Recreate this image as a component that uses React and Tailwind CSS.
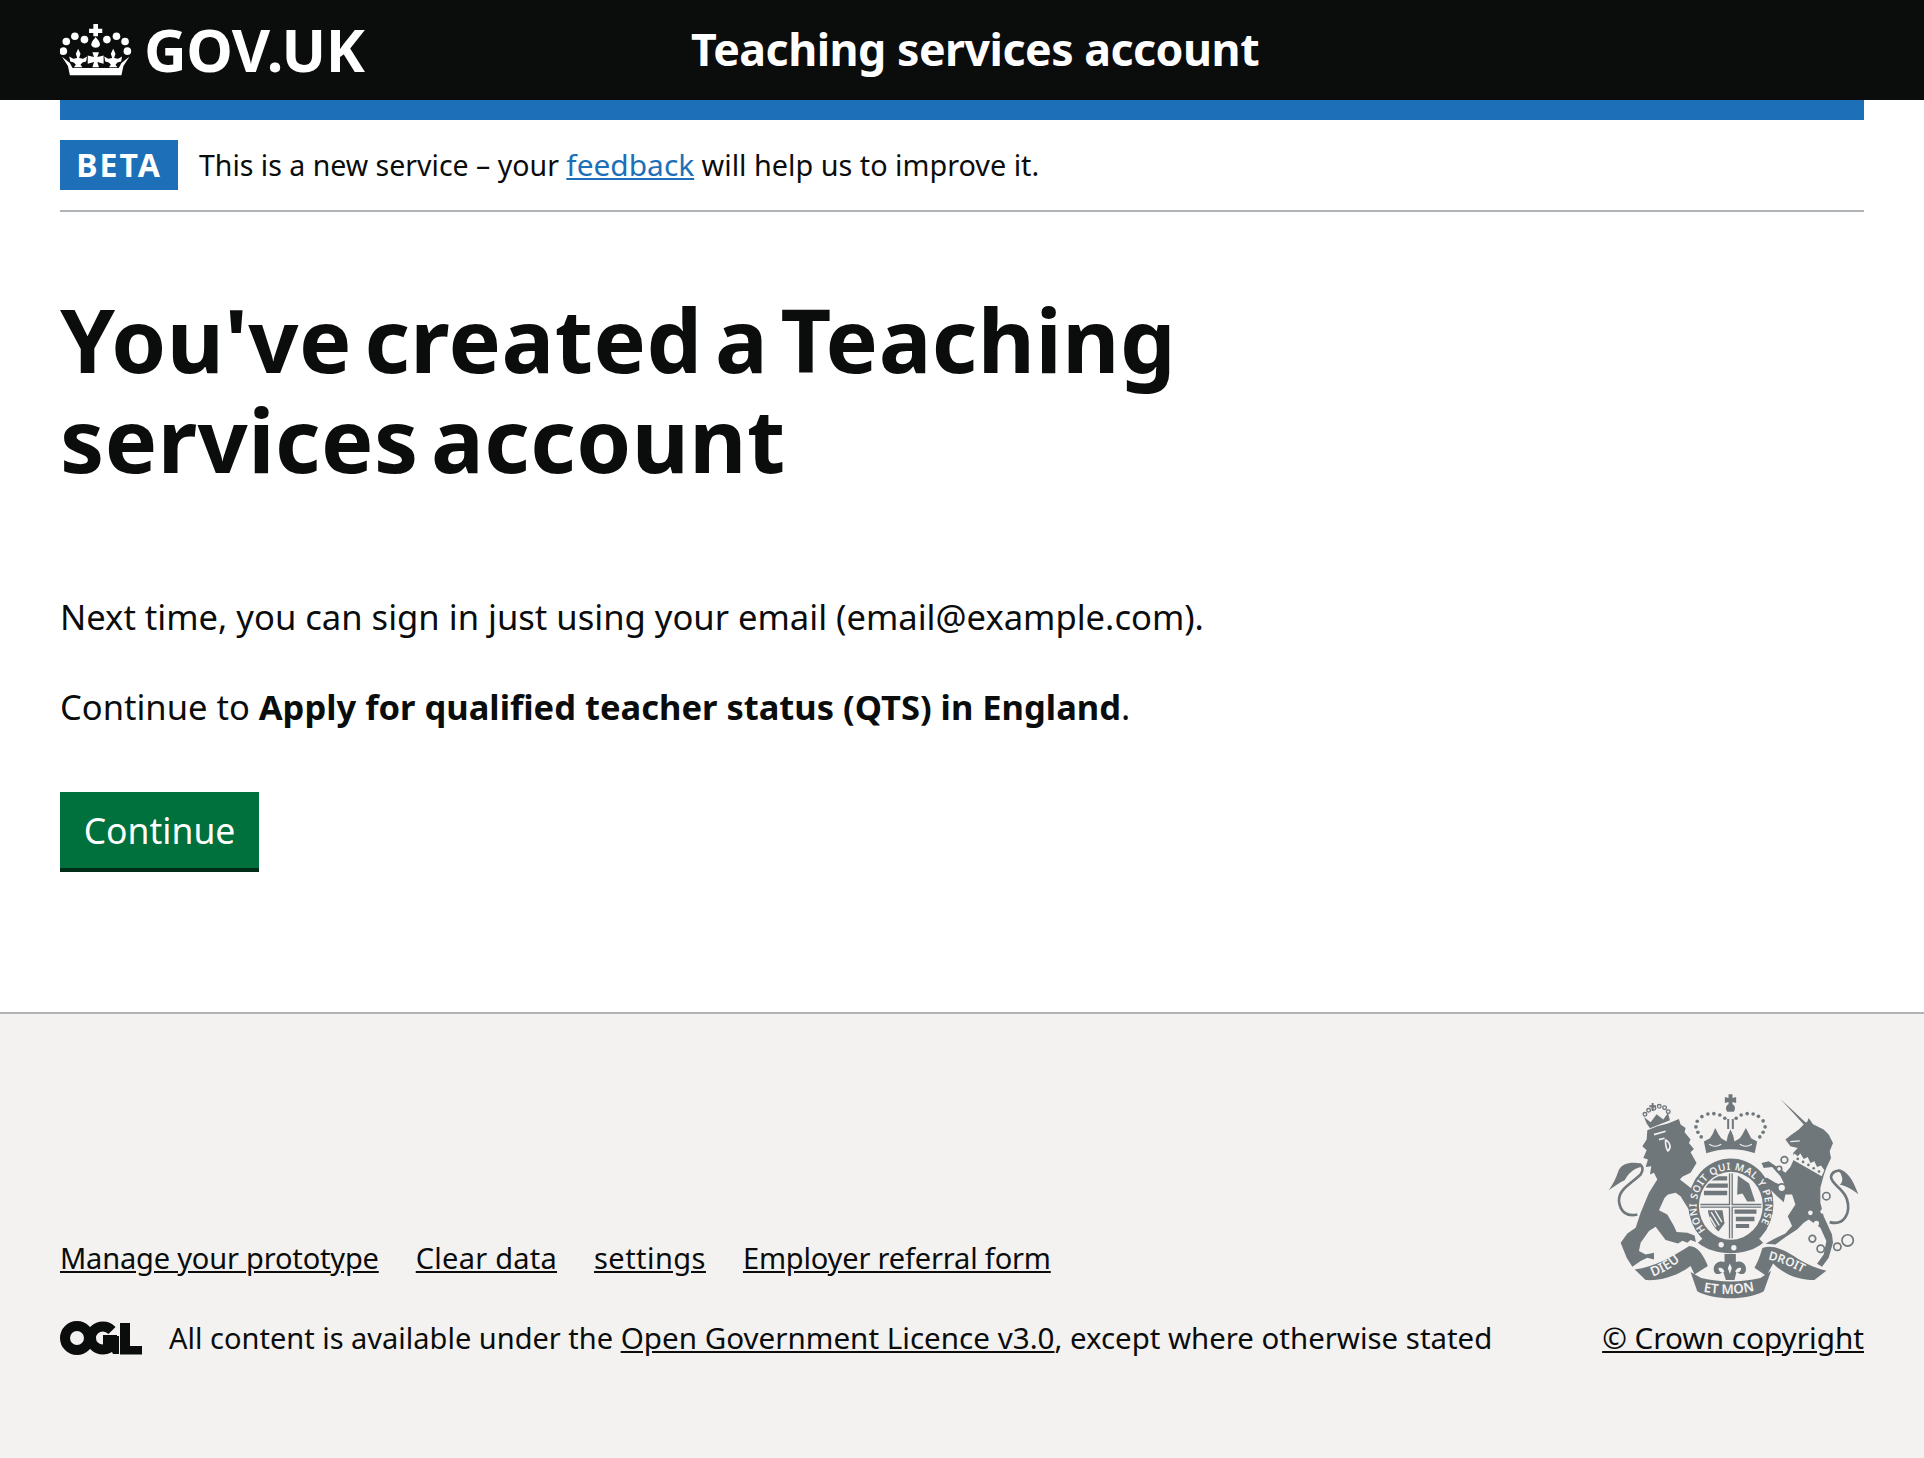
const sans = { fontFamily: '"Noto Sans", sans-serif' };

function Crown() {
  const dots = [[79,118],[105,102],[134,112],[202,112],[231,102],[257,118],[70,147],[264,147]];
  const fleur = "M115 140L122 155L118 168L130 170L142 163L139 178L128 181L122 188L128 196H102L108 188L102 181L91 178L88 163L100 170L112 168L108 155Z";
  return (
    <svg viewBox="60 62 218 160" className="w-[72px] h-[53px] shrink-0" fill="#fff" aria-hidden="true">
      {dots.map(([x, y], i) => <circle key={i} cx={x} cy={y} r="11.500" />)}
      <path d="M161 65h14v14h13v13h-13v10h-14V92h-13V79h13z" />
      <path d="M168 104C180 118 183 125 180 131C176 139 160 139 156 131C153 125 156 118 168 104Z" />
      <path d="M158 150L178 150L173 165L192 160L192 185L173 180L178 196L158 196L163 180L144 185L144 160L163 165Z" />
      <path d={fleur} />
      <path d={fleur} transform="translate(336 0) scale(-1 1)" />
      <path d="M90 220L84 192L66 164L90 183L98 198H238L246 183L270 164L252 192L246 220Z" />
    </svg>
  );
}

function Ogl() {
  return (
    <svg viewBox="0 0 82 34" className="w-[82px] h-[34px] shrink-0" fill="none" stroke="#0b0c0c" aria-hidden="true">
      <circle cx="17" cy="17" r="12" strokeWidth="10" />
      <path d="M52 9.500C49 6.500 46 5.500 43 5.500 36 5.500 31 10.500 31 17s5 11.500 12 11.500c4 0 8-2 9-5.500v-4H43" strokeWidth="10" />
      <path d="M46 15h13v18H53l-2-4z" fill="#0b0c0c" stroke="none" />
      <path d="M60 2h10v23h12v8.500H60z" fill="#0b0c0c" stroke="none" />
    </svg>
  );
}

function RoyalArms() {
  const c = "#6f777b";
  const bg = "#f3f2f1";
  const crownDots = [[332,172],[322,158],[316,142],[320,125],[334,111],[352,103],[370,102],[388,106],[403,116],[437,116],[452,106],[470,102],[488,103],[504,110],[518,124],[524,142],[518,158],[508,172]];
  const smallDots = [[163,104],[174,92],[190,86],[206,80],[222,84],[233,96]];
  const rings = [[582,241,10],[566,268,8],[574,325,12],[708,350,11],[666,478,10],[691,508,11],[741,502,11],[772,483,17]];
  const font = "Noto Sans, sans-serif";
  return (
    <svg viewBox="50 40 755 625" className="w-[252px] h-[208px]" aria-hidden="true">
      <defs>
        <path id="garter" d="M345 452A103 108 0 1 1 497 452" />
        <path id="ribbonLeft" d="M186 592C225 578 265 552 300 516" />
        <path id="ribbonMid" d="M332 636Q420 654 510 630" />
        <path id="ribbonRight" d="M533 540C570 548 620 568 655 592" />
        <clipPath id="shieldClip"><ellipse cx="421" cy="379" rx="92" ry="98" /></clipPath>
      </defs>

      {/* lion */}
      <path fill={c} d="M170 152L200 140L232 132L265 118L270 135L285 145L282 158L300 180L295 190L310 208L300 218L318 250L300 280L275 292L268 300L300 325L322 365L332 392L318 402L300 398L282 370L270 350L255 340L232 345L222 355L205 392L230 405L250 440L258 458L290 460L312 468L316 488L300 482L290 490L276 484L262 492L225 482L195 442L175 455L150 490L145 515L165 525L190 520L190 540L170 535L150 545L125 562L108 535L90 490L110 462L135 445L150 400L175 340L200 300L190 280L178 285L182 260L165 262L172 240L158 235L168 212L155 200L168 180Z" />
      <path fill="none" stroke={bg} strokeWidth="5" d="M190 165L225 155M225 180C240 190 242 205 232 214C226 206 224 195 225 180M205 180L222 176" />
      <path fill="none" stroke={c} strokeWidth="8" d="M140 405C110 412 88 398 85 365C83 330 118 315 150 285C160 270 156 258 145 254" />
      <path fill={c} d="M150 252C120 246 95 252 84 272C76 296 66 316 54 332C72 320 88 308 102 302C112 282 130 266 150 262Z" />
      {smallDots.map(([x, y], i) => <circle key={i} cx={x} cy={y} r="5.500" fill="none" stroke={c} strokeWidth="4" />)}
      <path fill={c} d="M160 112L180 128L198 104L218 120L232 100L238 122L178 146L168 132Z" />
      <path fill={c} d="M183 70h6v7h7v6h-7v11h-6V83h-7v-6h7z" />

      {/* unicorn */}
      <path fill={c} d="M570 58L645 128L650 128L655 115L668 134L700 150L715 165L728 190L718 215L722 235L708 265L700 288L690 325L690 370L700 410L725 465L728 490L715 535L695 562L680 553L700 525L708 485L690 445L655 420L640 430L620 450L590 470L555 495L525 493L552 478L585 462L605 440L592 410L615 375L605 345L585 345L580 368L560 350L530 320L515 298L530 295L555 310L585 320L570 290L545 262L520 265L513 250L535 245L560 262L585 280L600 262L612 235L608 220L622 205L600 200L585 180L600 168L625 150L640 135Z" />
      <path fill="none" stroke={bg} strokeWidth="4" d="M600 186L628 184" />
      <path fill={bg} d="M612 222L622 230L630 222L640 238L652 232L660 250L672 245L680 262L692 258L702 272L694 290L606 240Z" />
      {[[622,238],[638,247],[654,256],[670,266],[686,276]].map(([x, y], i) => <circle key={i} cx={x} cy={y} r="4" fill={c} />)}
      <path fill="none" stroke={c} strokeWidth="8" d="M718 428C762 440 782 400 770 360C760 325 722 315 722 292C724 276 742 270 754 276" />
      <path fill={c} d="M742 268C770 272 786 296 804 344C780 326 764 318 748 316C762 304 756 286 742 268Z" />
      {rings.map(([x, y, r], i) => <circle key={i} cx={x} cy={y} r={r} fill={bg} stroke={c} strokeWidth="5" />)}
      <circle cx="660" cy="400" r="7" fill={bg} /><circle cx="678" cy="432" r="8" fill={bg} /><circle cx="697" cy="396" r="7" fill={bg} />

      {/* royal crown */}
      {crownDots.map(([x, y], i) => <circle key={i} cx={x} cy={y} r="5.500" fill={c} />)}
      <path fill={c} d="M414 44h12v11l11-3v18l-11-3v7c8 4 10 14 4 22h-20c-6-8-4-18 4-22v-7l-11 3V52l11 3z" />
      <path fill={c} d="M410 118h6v30h-6zM424 118h6v30h-6z" />
      <path fill={c} d="M340 186L358 176L366 164L374 145L384 164L392 176L408 186L412 168L420 150L428 168L432 186L448 176L456 164L466 145L476 164L482 176L500 186L492 224L348 224Z" />
      <path fill="none" stroke={bg} strokeWidth="3.500" d="M356 194Q374 206 392 194M448 194Q466 206 484 194" />
      <path fill={bg} d="M345 222C392 205 448 205 497 222L486 238C448 224 392 224 356 238Z" />

      {/* garter and shield */}
      <ellipse cx="421" cy="375" rx="128" ry="138" fill={c} />
      <ellipse cx="421" cy="379" rx="96" ry="102" fill={bg} />
      <g clipPath="url(#shieldClip)">
        <path fill={bg} stroke={c} strokeWidth="4" d="M320 274H417V375H320ZM425 274H522V375H425ZM320 383H417V490H320ZM425 383H522V490H425Z" />
        <path fill={c} d="M340 290h70v13h-70zM346 312h66v13h-66zM340 334h70v13h-70zM442 288l34 24 18 54h-24l-14-24-16 4z" />
        <path fill={c} d="M432 390h66v13h-66zM436 412h56v13h-56zM436 434h40v12h-40zM352 392h44l6 40-18 24c-16-14-28-36-32-64z" />
        <path stroke={bg} strokeWidth="4" d="M362 398l24 40M374 394l20 34M358 412l18 30" />
      </g>
      <text fontFamily={font} fontSize="30" fontWeight="600" fill={bg} letterSpacing="1.800"><textPath href="#garter">HONI SOIT QUI MAL Y PENSE</textPath></text>
      <path d="M342 472C385 504 457 504 500 472L518 490C470 532 372 532 322 490Z" fill={c} />
      <circle cx="392" cy="496" r="8" fill={bg} /><circle cx="430" cy="505" r="8" fill={bg} />

      {/* ribbons and fleur-de-lis */}
      <path fill={c} d="M132 570C190 565 250 530 296 500C320 500 338 525 352 560L312 585L300 560C260 590 210 605 165 602Z" />
      <path fill={c} d="M516 506C545 495 580 510 610 530C640 550 670 565 708 574L672 602C630 602 585 590 548 552L528 590L492 565C506 540 510 525 516 506Z" />
      <path fill={c} d="M300 578L332 596C390 610 450 610 510 596L542 574L520 636C470 664 370 664 320 636Z" />
      <path fill={c} d="M402 524H436V548C450 542 470 552 466 574C462 590 446 584 438 576L432 602H406L398 576C390 584 374 590 370 574C366 552 388 542 402 548Z" />
      <path fill={bg} d="M418 552l6 14-6 18-6-18zM384 566c8-4 14 2 18 10-8 6-18 2-18-10zM452 566c-8-4-14 2-18 10 8 6 18 2 18-10z" />
      <text fontFamily={font} fontSize="40" fontWeight="600" fill={bg}><textPath href="#ribbonLeft">DIEU</textPath></text>
      <text fontFamily={font} fontSize="40" fontWeight="600" fill={bg}><textPath href="#ribbonMid" startOffset="6">ET MON</textPath></text>
      <text fontFamily={font} fontSize="36" fontWeight="600" fill={bg}><textPath href="#ribbonRight">DROIT</textPath></text>
    </svg>
  );
}

export default function App() {
  return (
    <div style={sans} className="min-h-[1458px] flex flex-col bg-white text-[#0b0c0c]">
      <header className="bg-[#0b0c0c] h-[100px] px-[60px] pb-[2px] flex items-center text-white">
        <div className="w-[631px] flex items-center gap-[12px]">
          <Crown />
          <span className="text-[59px] leading-none font-bold tracking-[-0.5px]">GOV.UK</span>
        </div>
        <span className="text-[44.7px] leading-none font-bold tracking-[-0.5px]">Teaching services account</span>
      </header>

      <main className="px-[60px] flex-1">
        <div className="h-[20px] bg-[#1d70b8]" />
        <div className="h-[92px] flex items-center gap-[21px] border-b-2 border-[#b1b4b6]">
          <strong className="w-[118px] h-[50px] bg-[#1d70b8] text-white text-[32px] font-bold tracking-[2px] flex items-center justify-center">BETA</strong>
          <p className="text-[28.5px]">This is a new service – your <a href="#" className="text-[#1d70b8] underline text-[29.9px]">feedback</a> <span className="text-[28.8px]">will help us to improve it.</span></p>
        </div>

        <h1 className="mt-[77px] text-[88px] leading-[100px] font-bold tracking-[0.5px] [word-spacing:-11px] w-[1200px]">You've created a Teaching services account</h1>
        <p className="mt-[103px] text-[34.6px] leading-[50px]">Next time, you can sign in just using your email (email@example.com).</p>
        <p className="mt-[40px] text-[34.5px] leading-[50px]">Continue to <strong>Apply for qualified teacher status (QTS) in England</strong>.</p>
        <button className="mt-[60px] w-[199px] h-[80px] pt-[2px] bg-[#00703c] border-b-4 border-[#002d18] text-white text-[35.500px] flex items-center justify-center">Continue</button>
      </main>

      <footer className="mt-[130px] h-[446px] bg-[#f3f2f1] border-t-2 border-[#b1b4b6] px-[60px] pt-[80px] flex items-end justify-between pb-[100px]">
        <div>
          <ul className="flex gap-[37px] text-[29px] leading-[40px] mb-[40px]">
            <li><a href="#" className="underline tracking-[-0.18px]">Manage your prototype</a></li>
            <li><a href="#" className="underline tracking-[0.25px]">Clear data</a></li>
            <li><a href="#" className="underline tracking-[0.45px]">settings</a></li>
            <li><a href="#" className="underline tracking-[-0.17px]">Employer referral form</a></li>
          </ul>
          <div className="flex items-center gap-[27px]">
            <Ogl />
            <span className="text-[29px] leading-[40px]">All content is available under the <a href="#" className="underline text-[29.6px]">Open Government Licence v3.0</a><span className="text-[29.4px]">, except where otherwise stated</span></span>
          </div>
        </div>
        <div className="flex flex-col items-center gap-[17px]">
          <RoyalArms />
          <a href="#" className="text-[29.7px] leading-[40px] underline">© Crown copyright</a>
        </div>
      </footer>
    </div>
  );
}
